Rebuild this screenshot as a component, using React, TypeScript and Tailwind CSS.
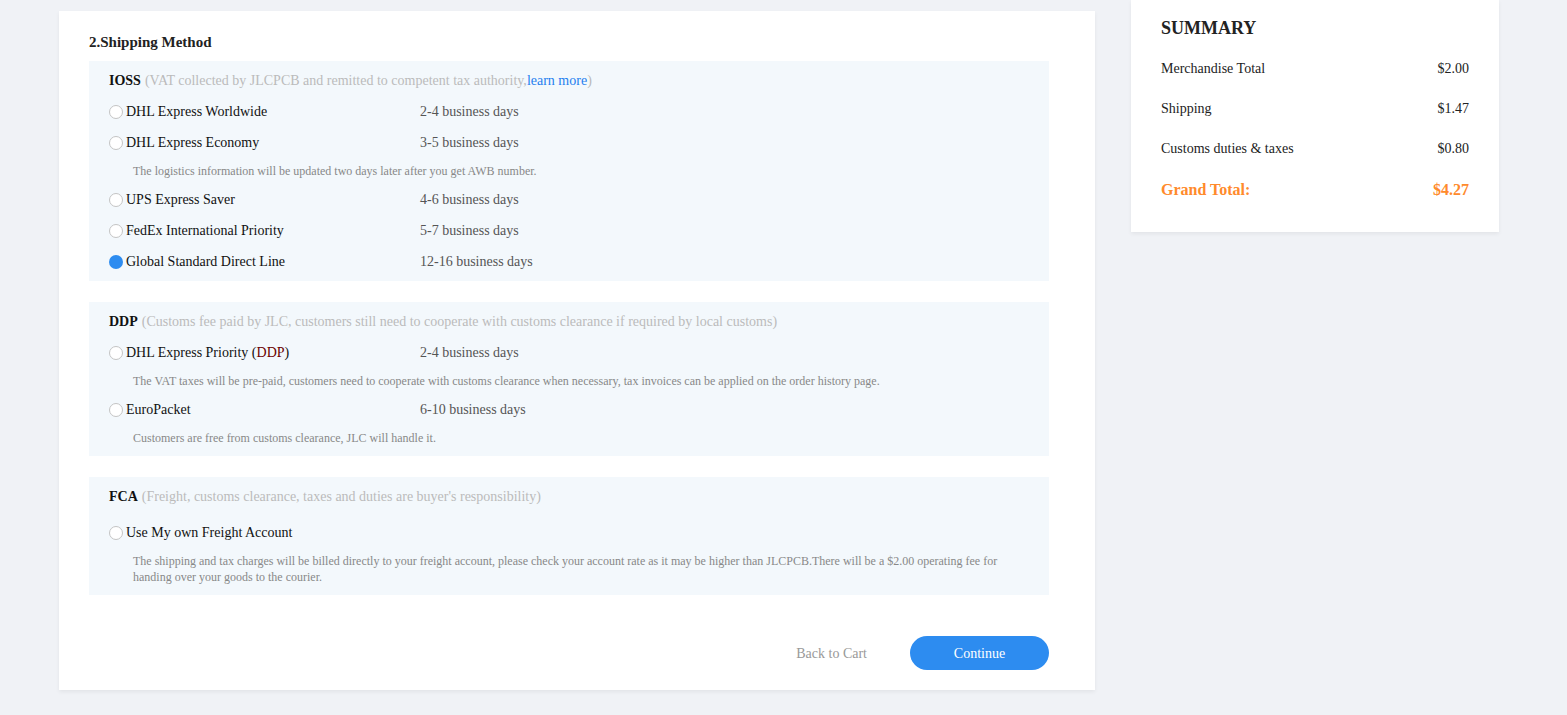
import React from "react";

type Opt = { name: React.ReactNode; days: string; checked?: boolean; note?: string; noteH?: string };

function Radio({ checked }: { checked?: boolean }) {
  return checked ? (
    <span className="inline-block w-[14px] h-[14px] rounded-full bg-[#2d8cf0] shrink-0" />
  ) : (
    <span className="inline-block w-[14px] h-[14px] rounded-full border border-[#c4c4c4] bg-white shrink-0" />
  );
}

function Row({ o }: { o: Opt }) {
  return (
    <>
      <div className="flex items-center h-[31px] text-[14px]">
        <div className="flex items-center w-[311px] gap-[3px] text-[#111]">
          <Radio checked={o.checked} />
          <span>{o.name}</span>
        </div>
        <div className="text-[#555]">{o.days}</div>
      </div>
      {o.note && (
        <div className={`flex items-center pl-[24px] text-[12px] text-[#888] ${o.noteH ?? "h-[26px]"}`}>{o.note}</div>
      )}
    </>
  );
}

export default function App() {
  return (
    <div className="min-h-screen bg-[#f0f2f6] font-['Liberation_Serif',serif]">
      <div className="flex items-start pl-[59px] gap-[36px]">
        <div className="mt-[11px] w-[1036px] bg-white shadow-[0_2px_4px_rgba(0,0,0,0.06)] pt-[21px] pb-[20px] pl-[30px] pr-[46px]">
          <div className="h-[20px] flex items-center text-[15px] font-bold text-[#222] mb-[9px]">2.Shipping Method</div>

          <div className="bg-[#f3f8fc] pl-[20px] pr-[20px] pt-[4px] pb-[4px]">
            <div className="h-[31px] flex items-center text-[14px]">
              <span className="font-bold text-[#111]">IOSS</span>
              <span className="text-[#bbb] ml-[4px]">
                (VAT collected by JLCPCB and remitted to competent tax authority,<span className="text-[#1f7fef]">learn more</span>)
              </span>
            </div>
            <Row o={{ name: "DHL Express Worldwide", days: "2-4 business days" }} />
            <Row o={{ name: "DHL Express Economy", days: "3-5 business days", note: "The logistics information will be updated two days later after you get AWB number.", noteH: "h-[26px]" }} />
            <Row o={{ name: "UPS Express Saver", days: "4-6 business days" }} />
            <Row o={{ name: "FedEx International Priority", days: "5-7 business days" }} />
            <Row o={{ name: "Global Standard Direct Line", days: "12-16 business days", checked: true }} />
          </div>

          <div className="mt-[21px] bg-[#f3f8fc] pl-[20px] pr-[20px] pt-[4px] pb-[5px]">
            <div className="h-[31px] flex items-center text-[14px]">
              <span className="font-bold text-[#111]">DDP</span>
              <span className="text-[#bbb] ml-[4px]">
                (Customs fee paid by JLC, customers still need to cooperate with customs clearance if required by local customs)
              </span>
            </div>
            <Row
              o={{
                name: (
                  <>
                    DHL Express Priority (<span className="text-[#6b0000]">DDP</span>)
                  </>
                ),
                days: "2-4 business days",
                note: "The VAT taxes will be pre-paid, customers need to cooperate with customs clearance when necessary, tax invoices can be applied on the order history page.",
              }}
            />
            <Row o={{ name: "EuroPacket", days: "6-10 business days", note: "Customers are free from customs clearance, JLC will handle it." }} />
          </div>

          <div className="mt-[21px] bg-[#f3f8fc] pl-[20px] pr-[20px] pt-[4px] pb-[10px]">
            <div className="h-[31px] flex items-center text-[14px]">
              <span className="font-bold text-[#111]">FCA</span>
              <span className="text-[#bbb] ml-[4px]">(Freight, customs clearance, taxes and duties are buyer's responsibility)</span>
            </div>
            <div className="mt-[5px] flex items-center h-[31px] text-[14px] gap-[3px] text-[#111]">
              <Radio />
              <span>Use My own Freight Account</span>
            </div>
            <div className="mt-[5px] pl-[24px] text-[12px] leading-[16px] text-[#888]">
              The shipping and tax charges will be billed directly to your freight account, please check your account rate as it may be higher than JLCPCB.There will be a $2.00 operating fee for handing over your goods to the courier.
            </div>
          </div>

          <div className="mt-[41px] flex items-center justify-end">
            <span className="text-[14px] text-[#999] mr-[43px]">Back to Cart</span>
            <button className="w-[139px] h-[34px] rounded-full bg-[#2d8cf0] text-white text-[14px] font-['Liberation_Serif',serif]">
              Continue
            </button>
          </div>
        </div>

        <div className="w-[368px] bg-white shadow-[0_2px_4px_rgba(0,0,0,0.06)] px-[30px] pt-[18px] pb-[20px]">
          <div className="h-[20px] flex items-center text-[18px] font-bold text-[#222]">SUMMARY</div>
          <div className="mt-[10px]">
            <div className="h-[40px] flex items-center justify-between text-[14px] text-[#222]">
              <span>Merchandise Total</span>
              <span>$2.00</span>
            </div>
            <div className="h-[40px] flex items-center justify-between text-[14px] text-[#222]">
              <span>Shipping</span>
              <span>$1.47</span>
            </div>
            <div className="h-[40px] flex items-center justify-between text-[14px] text-[#222]">
              <span>Customs duties &amp; taxes</span>
              <span>$0.80</span>
            </div>
            <div className="h-[44px] flex items-center justify-between text-[16px] font-bold text-[#ff8a2c]">
              <span>Grand Total:</span>
              <span>$4.27</span>
            </div>
          </div>
        </div>
      </div>
    </div>
  );
}
